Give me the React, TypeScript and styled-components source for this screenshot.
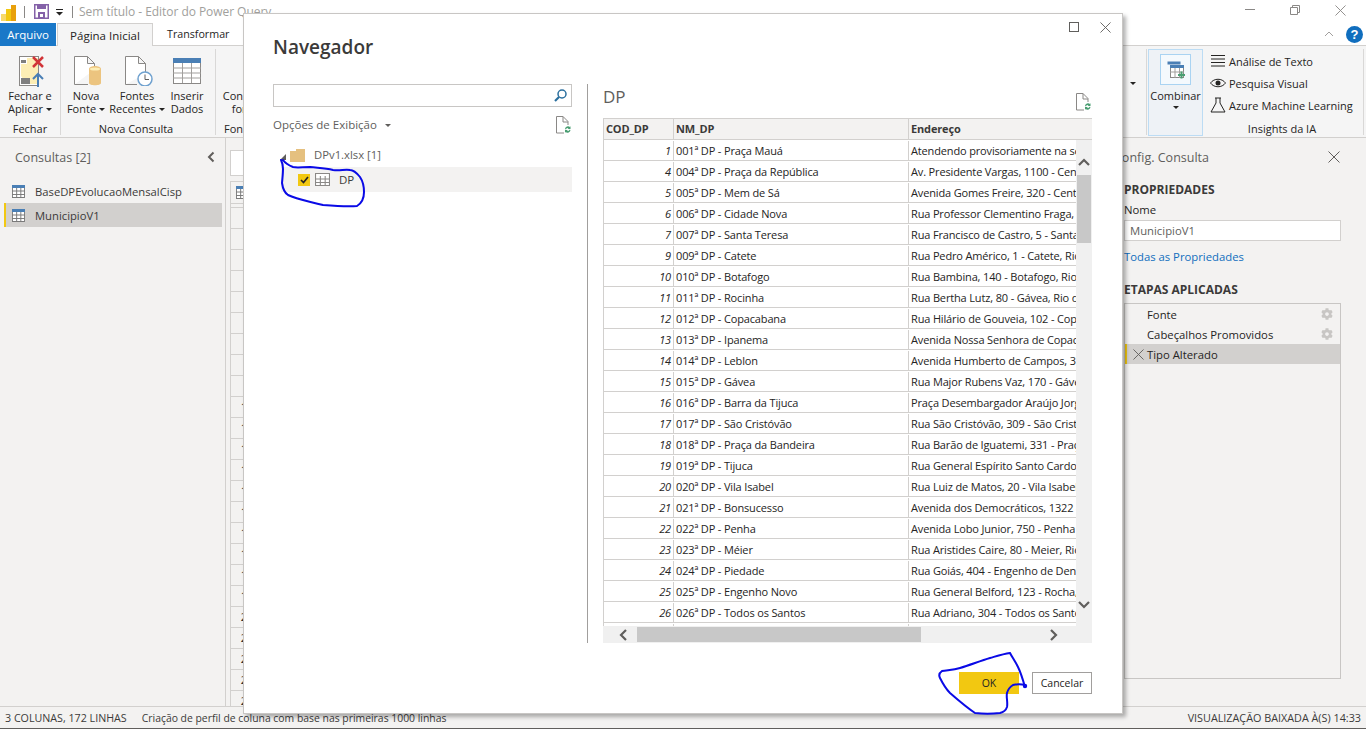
import React from "react";
import styled, { createGlobalStyle } from "styled-components";
import { FaCog } from "react-icons/fa";

const FONT = `"Open Sans", "Noto Sans", "Liberation Sans", sans-serif`;

const Global = createGlobalStyle`
  html, body { margin: 0; padding: 0; overflow: hidden; }
  body { font-family: ${FONT}; font-size: 12px; color: #252423; background: #f3f2f1; }
  * { box-sizing: border-box; }
`;

const Page = styled.div`
  position: relative;
  width: 1366px;
  height: 729px;
  overflow: hidden;
  display: flex;
  flex-direction: column;
  background: #f3f2f1;
`;

/* ---------- title bar ---------- */
const TitleBar = styled.div`
  height: 23px;
  background: #fff;
  display: flex;
  align-items: center;
  flex: none;
`;
const TitleLogo = styled.svg`
  margin-left: 1px;
  width: 15px;
  height: 18px;
`;
const TitleSep = styled.span<{ $r: number }>`
  width: 1px;
  height: 12px;
  background: #8a8886;
  margin: 0 ${(p) => p.$r}px 0 8px;
`;
const TitleText = styled.span`
  font-size: 12px;
  letter-spacing: -0.05px;
  color: #a19f9d;
  white-space: nowrap;
`;
const WinButtons = styled.div`
  margin-left: auto;
  display: flex;
  align-items: center;
  gap: 35px;
  padding: 0 20px 3px 0;
`;

/* ---------- tabs ---------- */
const TabRow = styled.div`
  height: 23px;
  flex: none;
  display: flex;
  align-items: stretch;
  background: #fff;
  border-bottom: 1px solid #d2d0ce;
`;
const FileTab = styled.div`
  width: 56px;
  height: 23px;
  background: #1a78c8;
  color: #fff;
  font-size: 11.5px;
  display: flex;
  align-items: center;
  justify-content: center;
`;
const ActiveTab = styled.div`
  margin-left: 1px;
  width: 96px;
  height: 23px;
  font-size: 11.5px;
  white-space: nowrap;
  display: flex;
  align-items: center;
  justify-content: center;
  background: #f5f5f5;
  border: 1px solid #d2d0ce;
  border-bottom: none;
  z-index: 1;
`;
const Tab = styled.div`
  padding: 0 14px;
  height: 22px;
  font-size: 10.7px;
  white-space: nowrap;
  display: flex;
  align-items: center;
`;
const TabRight = styled.div`
  margin-left: auto;
  display: flex;
  align-items: center;
  gap: 12px;
  padding-right: 3px;
`;
const HelpBadge = styled.span`
  width: 17px;
  height: 17px;
  border-radius: 50%;
  background: #106ebe;
  color: #fff;
  font-weight: 700;
  font-size: 13px;
  font-family: "Liberation Sans", sans-serif;
  display: flex;
  align-items: center;
  justify-content: center;
`;

/* ---------- ribbon ---------- */
const Ribbon = styled.div`
  height: 92px;
  flex: none;
  display: flex;
  background: #f5f5f5;
  border-bottom: 1px solid #d2d0ce;
  padding: 3px 2px 0 0;
`;
const Group = styled.div<{ $w: number; $noSep?: boolean }>`
  width: ${(p) => p.$w}px;
  flex: none;
  height: 86px;
  display: flex;
  flex-direction: column;
  border-right: ${(p) => (p.$noSep ? "none" : "1px solid #d9d8d7")};
`;
const GroupItems = styled.div`
  flex: 1;
  min-height: 0;
  display: flex;
`;
const GroupLabel = styled.div<{ $pl?: number; $pr?: number }>`
  height: 16px;
  margin-bottom: -2px;
  padding: 0 ${(p) => p.$pr ?? 0}px 0 ${(p) => p.$pl ?? 0}px;
  font-size: 11px;
  color: #252423;
  text-align: ${(p) => (p.$pl ? "left" : "center")};
  white-space: nowrap;
  line-height: 16px;
`;
const BigButton = styled.div<{ $w: number }>`
  width: ${(p) => p.$w}px;
  flex: none;
  display: flex;
  flex-direction: column;
  align-items: center;
  font-size: 11px;
  line-height: 13px;
  text-align: center;
  white-space: nowrap;
  padding-top: 4px;
`;
const IconSlot = styled.div`
  height: 36px;
  display: flex;
  align-items: center;
  justify-content: center;
`;
const Caret = styled.span`
  display: inline-block;
  width: 0;
  height: 0;
  margin-left: 3px;
  vertical-align: 2px;
  border-left: 3px solid transparent;
  border-right: 3px solid transparent;
  border-top: 3px solid #252423;
`;
const RibbonSpacer = styled.div`
  flex: 1;
  display: flex;
  justify-content: flex-end;
  padding: 33px 10px 0 0;
`;
const CombineGroup = styled.div`
  width: 55px;
  margin: 0 1px 0 1px;
  height: 87px;
  flex: none;
  background: #eef2f6;
  border: 1px solid #bcdcf4;
  display: flex;
  flex-direction: column;
  align-items: center;
  padding-top: 4px;
  font-size: 11px;
  line-height: 13px;
`;
const CombineIcon = styled.div`
  width: 31px;
  height: 31px;
  background: #f4f9fd;
  border: 1px solid #a9d3f2;
  display: flex;
  align-items: center;
  justify-content: center;
  margin-bottom: 4px;
`;
const CombineCaret = styled(Caret)`
  margin: 4px 0 0 0;
`;
const InsightList = styled.div`
  flex: 1;
  min-height: 0;
  display: flex;
  flex-direction: column;
  padding: 1px 0 0 6px;
`;
const InsightRow = styled.div`
  height: 22px;
  flex: none;
  display: flex;
  align-items: center;
  gap: 3px;
  font-size: 11px;
  white-space: nowrap;
`;
const VSep = styled.div`
  width: 1px;
  height: 86px;
  background: #d9d8d7;
  flex: none;
`;

/* ---------- main area ---------- */
const Main = styled.div`
  flex: 1;
  display: flex;
  min-height: 0;
`;
const LeftPanel = styled.aside`
  width: 226px;
  flex: none;
  border-right: 1px solid #d2d0ce;
  padding: 0 0 0 4px;
`;
const PanelHead = styled.div`
  height: 38px;
  margin-bottom: 3px;
  display: flex;
  align-items: center;
  justify-content: space-between;
  padding: 0 9px 0 11px;
  font-size: 12.5px;
  color: #605e5c;
`;
const QueryRow = styled.div<{ $active?: boolean }>`
  width: 218px;
  height: 24px;
  display: flex;
  align-items: center;
  gap: 10px;
  padding-left: 6px;
  font-size: 11.25px;
  white-space: nowrap;
  color: #3b3a39;
  background: ${(p) => (p.$active ? "#d2d0ce" : "transparent")};
  border-left: 2px solid ${(p) => (p.$active ? "#f2c811" : "transparent")};
`;
const Center = styled.div`
  flex: 1;
  min-width: 0;
  padding: 12px 0 0 4px;
  overflow: hidden;
`;
const FormulaBox = styled.div`
  height: 26px;
  background: #fff;
  border: 1px solid #d2d0ce;
  margin-bottom: 5px;
`;
const BackGrid = styled.div`
  border-left: 1px solid #d2d0ce;
  border-top: 1px solid #d2d0ce;
`;
const BackHead = styled.div`
  height: 22px;
  padding: 4px 0 0 5px;
  border-bottom: 1px solid #d2d0ce;
  margin-bottom: 3px;
`;
const BackRow = styled.div`
  height: 21px;
  width: 32px;
  font-size: 11px;
  line-height: 20px;
  text-align: center;
  border-top: 1px solid #d2d0ce;
`;
const RightPanel = styled.aside`
  width: 258px;
  flex: none;
  padding-left: 16px;
`;
const RightHead = styled.div`
  height: 38px;
  margin: 0 0 6px -10px;
  display: flex;
  align-items: center;
  justify-content: space-between;
  padding-right: 26px;
  font-size: 12.5px;
  color: #605e5c;
`;
const SectionTitle = styled.div<{ $mt?: number }>`
  margin-top: ${(p) => p.$mt ?? 0}px;
  font-size: 12px;
  font-weight: 700;
  line-height: 16px;
  color: #3b3a39;
`;
const FieldLabel = styled.div`
  margin-top: 4px;
  font-size: 11.3px;
  line-height: 16px;
`;
const FieldInput = styled.div`
  margin-top: 2px;
  width: 217px;
  height: 21px;
  background: #fff;
  border: 1px solid #d2d0ce;
  padding-left: 5px;
  font-size: 11.3px;
  line-height: 19px;
  color: #605e5c;
`;
const PropLink = styled.div`
  margin-top: 8px;
  font-size: 11.3px;
  line-height: 16px;
  color: #106ebe;
`;
const StepList = styled.div`
  margin-top: 5px;
  width: 217px;
  height: 376px;
  border: 1px solid #c8c6c4;
`;
const StepRow = styled.div<{ $active?: boolean }>`
  height: 20px;
  display: flex;
  align-items: center;
  font-size: 11.3px;
  white-space: nowrap;
  padding: 0 7px 0 ${(p) => (p.$active ? "6px" : "22px")};
  background: ${(p) => (p.$active ? "#d2d0ce" : "transparent")};
  border-left: ${(p) => (p.$active ? "2px solid #f2c811" : "none")};
`;
const StepName = styled.span<{ $ml?: number }>`
  flex: 1;
  margin-left: ${(p) => p.$ml ?? 0}px;
`;

/* ---------- status ---------- */
const StatusBar = styled.div`
  height: 23px;
  flex: none;
  display: flex;
  align-items: center;
  padding: 0 5px;
  color: #3b3a39;
  border-top: 1px solid #d2d0ce;
  border-bottom: 1px solid #605e5c;
  white-space: nowrap;
`;
const StatusItem = styled.span<{ $size: number; $ml?: string }>`
  font-size: ${(p) => p.$size}px;
  margin-left: ${(p) => p.$ml ?? "0"};
`;

/* ---------- dialog ---------- */
const Dialog = styled.div`
  position: absolute;
  left: 243px;
  top: 13px;
  width: 880px;
  height: 701px;
  background: #fff;
  border: 1px solid #c8c6c4;
  box-shadow: 3px 3px 4px rgba(0, 0, 0, 0.3);
  display: flex;
  flex-direction: column;
`;
const DialogHead = styled.div`
  height: 70px;
  flex: none;
  display: flex;
  justify-content: space-between;
  padding: 0 11px 0 29px;
`;
const DialogTitle = styled.div`
  margin-top: 19px;
  font-size: 19px;
  font-weight: 600;
  line-height: 28px;
  color: #3b3a39;
`;
const DialogWinBtns = styled.div`
  display: flex;
  gap: 21px;
  padding-top: 8px;
  align-items: flex-start;
`;
const DialogBody = styled.div`
  flex: 1;
  min-height: 0;
  display: flex;
  padding: 0 30px 0 29px;
`;
const NavCol = styled.div`
  width: 299px;
  flex: none;
`;
const SearchBox = styled.div`
  height: 23px;
  border: 1px solid #c8c6c4;
  display: flex;
  align-items: center;
  justify-content: flex-end;
  padding-right: 3px;
`;
const OptionsRow = styled.div`
  height: 35px;
  display: flex;
  align-items: center;
  justify-content: space-between;
  padding-right: 1px;
  font-size: 11.5px;
  color: #605e5c;
`;
const OptionsCaret = styled.span`
  display: inline-block;
  width: 0;
  height: 0;
  margin-left: 8px;
  vertical-align: 2px;
  border-left: 3px solid transparent;
  border-right: 3px solid transparent;
  border-top: 3px solid #605e5c;
`;
const TreeRoot = styled.div`
  height: 25px;
  display: flex;
  align-items: center;
  padding-left: 7px;
  font-size: 11.3px;
  color: #605e5c;
`;
const TreeTriangle = styled.span`
  width: 0;
  height: 0;
  margin: 5px 4px 0 0;
  border-bottom: 6px solid #605e5c;
  border-left: 6px solid transparent;
`;
const TreeLeaf = styled.div`
  margin-left: 8px;
  height: 25px;
  background: #f3f2f1;
  display: flex;
  align-items: center;
  padding-left: 17px;
  font-size: 11.5px;
  color: #3b3a39;
`;
const LeafName = styled.span`
  margin-left: 9px;
`;
const CheckBox = styled.span`
  width: 12px;
  height: 12px;
  background: #f2c811;
  display: flex;
  align-items: center;
  justify-content: center;
  margin-right: 5px;
`;
const Divider = styled.div`
  width: 1px;
  height: 559px;
  background: #a19f9d;
  margin: 0 15px 0 15px;
  flex: none;
`;
const PreviewCol = styled.div`
  flex: 1;
  min-width: 0;
`;
const PreviewHead = styled.div`
  height: 34px;
  display: flex;
  justify-content: space-between;
  align-items: flex-start;
  font-size: 17px;
  line-height: 26px;
  color: #605e5c;
  padding-right: 1px;
  & > svg { margin-top: 9px; }
`;
const TableBox = styled.div`
  width: 489px;
  height: 525px;
  display: flex;
  flex-direction: column;
  font-size: 11px;
  letter-spacing: -0.15px;
`;
const HeadRow = styled.div`
  height: 22px;
  flex: none;
  display: flex;
  background: #f3f2f1;
  border: 1px solid #d2d0ce;
  border-right: none;
  font-weight: 700;
  color: #3b3a39;
`;
const ColOne = styled.div<{ $italic?: boolean }>`
  width: 70px;
  flex: none;
  padding: ${(p) => (p.$italic ? "0 2px 0 0" : "0 0 0 2px")};
  text-align: ${(p) => (p.$italic ? "right" : "left")};
  font-style: ${(p) => (p.$italic ? "italic" : "normal")};
  border-right: 1px solid #d2d0ce;
  line-height: 20px;
`;
const ColTwo = styled.div`
  width: 235px;
  flex: none;
  padding-left: 2px;
  border-right: 1px solid #d2d0ce;
  line-height: 20px;
  white-space: nowrap;
  overflow: hidden;
`;
const ColThree = styled.div`
  flex: 1;
  min-width: 0;
  padding-left: 2px;
  line-height: 20px;
  white-space: nowrap;
  overflow: hidden;
`;
const BodyWrap = styled.div`
  flex: 1;
  min-height: 0;
  display: flex;
`;
const RowsCol = styled.div`
  flex: 1;
  min-width: 0;
  display: flex;
  flex-direction: column;
`;
const RowsClip = styled.div`
  flex: 1;
  min-height: 0;
  overflow: hidden;
  border-left: 1px solid #d2d0ce;
`;
const DataRow = styled.div`
  height: 21px;
  padding-top: 1px;
  display: flex;
  border-bottom: 1px solid #d2d0ce;
  color: #252423;
`;
const VScroll = styled.div`
  width: 16px;
  flex: none;
  background: #f0f0f0;
  display: flex;
  flex-direction: column;
  align-items: center;
  padding-top: 17px;
`;
const VThumb = styled.div`
  width: 14px;
  height: 68px;
  background: #c8c8c8;
  margin-top: 4px;
`;
const VDown = styled.div`
  margin-top: 355px;
`;
const HScroll = styled.div`
  height: 17px;
  flex: none;
  background: #f0f0f0;
  display: flex;
  align-items: center;
  padding-left: 14px;
`;
const HThumb = styled.div`
  width: 284px;
  height: 15px;
  background: #c8c8c8;
  margin: 0 125px 0 6px;
`;
const DialogFoot = styled.div`
  height: 59px;
  flex: none;
  display: flex;
  justify-content: flex-end;
  gap: 13px;
  padding: 18px 30px 0 0;
`;
const FootButton = styled.div<{ $primary?: boolean }>`
  width: 60px;
  height: 22px;
  font-size: 10.5px;
  line-height: 21px;
  text-align: center;
  background: ${(p) => (p.$primary ? "#f2c811" : "#fff")};
  border: 1px solid ${(p) => (p.$primary ? "#f2c811" : "#a19f9d")};
  color: #252423;
`;
const Scribbles = styled.svg`
  position: absolute;
  left: 0;
  top: 0;
  width: 1366px;
  height: 729px;
  pointer-events: none;
`;

/* ---------- icons ---------- */
const X = ({ s = 12, c = "#605e5c" }: { s?: number; c?: string }) => (
  <svg width={s} height={s} viewBox="0 0 12 12" style={{ flex: "none" }}>
    <path d="M.5.5l11 11M11.5.5l-11 11" stroke={c} strokeWidth="1" fill="none" />
  </svg>
);
const ChevL = () => (
  <svg width="10" height="12" viewBox="0 0 10 12">
    <path d="M7.500 1.500L3 6l4.500 4.500" stroke="#605e5c" strokeWidth="2" fill="none" />
  </svg>
);
const GridIcon = ({ w = 13, h = 13, bar = "#4a7fb5", line = "#7a7a7a" }: { w?: number; h?: number; bar?: string; line?: string }) => (
  <svg width={w} height={h} viewBox="0 0 14 13" preserveAspectRatio="none" style={{ flex: "none" }}>
    <rect x=".5" y=".5" width="13" height="12" fill="#fff" stroke={line} />
    <rect x="0" y="0" width="14" height="3" fill={bar} />
    <path d="M0 6h14M0 9.500h14M5 3v10M9.500 3v10" stroke={line} strokeWidth="1" />
  </svg>
);
const Refresh = () => (
  <svg width="15" height="18" viewBox="0 0 15 18" style={{ flex: "none" }}>
    <path d="M8 17H.5V.5H7l5 5V9M7 .5V6h5" fill="none" stroke="#8a8886" />
    <path d="M9 13a3 3 0 0 1 5-2l.5-1v3h-3l1-.8A2 2 0 0 0 10 13.500zM14.500 14a3 3 0 0 1-5 2l-.5 1v-3h3l-1 .8a2 2 0 0 0 2.500-1z" fill="#4a9e72" />
  </svg>
);

const rows: [number, string, string][] = [
  [1, "001ª DP - Praça Mauá", "Atendendo provisoriamente na sede"],
  [4, "004ª DP - Praça da República", "Av. Presidente Vargas, 1100 - Centro"],
  [5, "005ª DP - Mem de Sá", "Avenida Gomes Freire, 320 - Centro"],
  [6, "006ª DP - Cidade Nova", "Rua Professor Clementino Fraga, 77"],
  [7, "007ª DP - Santa Teresa", "Rua Francisco de Castro, 5 - Santa"],
  [9, "009ª DP - Catete", "Rua Pedro Américo, 1 - Catete, Rio"],
  [10, "010ª DP - Botafogo", "Rua Bambina, 140 - Botafogo, Rio"],
  [11, "011ª DP - Rocinha", "Rua Bertha Lutz, 80 - Gávea, Rio de"],
  [12, "012ª DP - Copacabana", "Rua Hilário de Gouveia, 102 - Copa"],
  [13, "013ª DP - Ipanema", "Avenida Nossa Senhora de Copacaba"],
  [14, "014ª DP - Leblon", "Avenida Humberto de Campos, 315"],
  [15, "015ª DP - Gávea", "Rua Major Rubens Vaz, 170 - Gávea"],
  [16, "016ª DP - Barra da Tijuca", "Praça Desembargador Araújo Jorge"],
  [17, "017ª DP - São Cristóvão", "Rua São Cristóvão, 309 - São Cristó"],
  [18, "018ª DP - Praça da Bandeira", "Rua Barão de Iguatemi, 331 - Praça"],
  [19, "019ª DP - Tijuca", "Rua General Espírito Santo Cardoso"],
  [20, "020ª DP - Vila Isabel", "Rua Luiz de Matos, 20 - Vila Isabel"],
  [21, "021ª DP - Bonsucesso", "Avenida dos Democráticos, 1322 -"],
  [22, "022ª DP - Penha", "Avenida Lobo Junior, 750 - Penha"],
  [23, "023ª DP - Méier", "Rua Aristides Caire, 80 - Meier, Rio"],
  [24, "024ª DP - Piedade", "Rua Goiás, 404 - Engenho de Dentro"],
  [25, "025ª DP - Engenho Novo", "Rua General Belford, 123 - Rocha,"],
  [26, "026ª DP - Todos os Santos", "Rua Adriano, 304 - Todos os Santos"],
];

const ScrollChev = ({ d }: { d: "u" | "d" | "l" | "r" }) => {
  const p = {
    u: "M2 8l5-5 5 5",
    d: "M2 4l5 5 5-5",
    l: "M9 2L4 7l5 5",
    r: "M5 2l5 5-5 5",
  }[d];
  return (
    <svg width="14" height="14" viewBox="0 0 14 14" style={{ flex: "none" }}>
      <path d={p} fill="none" stroke="#605e5c" strokeWidth="2.2" />
    </svg>
  );
};

export default function App() {
  return (
    <Page>
      <Global />
      <TitleBar>
        <TitleLogo viewBox="0 0 15 18">
          <rect x="10" y="2" width="5" height="16" fill="#e8a00c" />
          <rect x="5" y="6" width="5" height="12" fill="#f2c811" />
          <rect x="0" y="11" width="5" height="7" fill="#f7d96b" />
        </TitleLogo>
        <TitleSep $r={9} />
        <svg width="15" height="15" viewBox="0 0 15 15">
          <rect x=".75" y=".75" width="13.5" height="13.5" fill="#fff" stroke="#8461a8" strokeWidth="1.5" />
          <rect x="3" y="1" width="9" height="4" fill="#8461a8" />
          <rect x="4" y="8" width="7" height="6" fill="#8461a8" />
          <rect x="6" y="10" width="3" height="3" fill="#fff" />
        </svg>
        <svg width="9" height="8" viewBox="0 0 9 8" style={{ marginLeft: 6 }}>
          <path d="M1 1h7v1H1zM1 4h7L4.500 7.500z" fill="#252423" />
        </svg>
        <TitleSep $r={6} />
        <TitleText>Sem título - Editor do Power Query</TitleText>
        <WinButtons>
          <svg width="10" height="2" viewBox="0 0 10 2"><path d="M0 .5h10" stroke="#8a8886" /></svg>
          <svg width="10" height="10" viewBox="0 0 10 10"><path d="M.5 2.500h7v7h-7zM2.500 2.500v-2h7v7h-2" fill="none" stroke="#8a8886" /></svg>
          <X s={11} c="#8a8886" />
        </WinButtons>
      </TitleBar>
      <TabRow>
        <FileTab>Arquivo</FileTab>
        <ActiveTab>Página Inicial</ActiveTab>
        <Tab>Transformar</Tab>
        <TabRight>
          <svg width="10" height="6" viewBox="0 0 10 6"><path d="M1 5l4-4 4 4" fill="none" stroke="#a19f9d" /></svg>
          <HelpBadge>?</HelpBadge>
        </TabRight>
      </TabRow>
      <Ribbon>
        <Group $w={61}>
          <GroupItems>
            <BigButton $w={60}>
              <IconSlot>
                <svg width="26" height="31" viewBox="0 0 26 31" style={{ marginLeft: 3 }}>
                  <rect x=".5" y=".5" width="19" height="29" fill="#fff" stroke="#8a8886" />
                  <path d="M8 2h11v26H8l-6-8V8h6z" fill="#fdeeb5" />
                  <rect x="2" y="4" width="5" height="3" fill="#7f7f7f" />
                  <rect x="2" y="22" width="9" height="6" fill="#7f7f7f" />
                  <path d="M14 1l10 10M24 1L14 11" stroke="#d13438" strokeWidth="2.500" />
                  <path d="M19 31V18M14 23l5-5 5 5" stroke="#4a7fb5" strokeWidth="2" fill="none" />
                </svg>
              </IconSlot>
              <span>Fechar e</span>
              <span>Aplicar<Caret /></span>
            </BigButton>
          </GroupItems>
          <GroupLabel>Fechar</GroupLabel>
        </Group>
        <Group $w={155}>
          <GroupItems>
            <BigButton $w={50}>
              <IconSlot>
                <svg width="28" height="30" viewBox="0 0 28 30" style={{ marginLeft: 3 }}>
                  <path d="M.5 28.500V.5h13l7 7v6M13.500.5v7h7M14 28.500H.5" fill="#fff" stroke="#8a8886" />
                  <path d="M15 13c0-4 12-4 12 0v14c0 3-12 3-12 0z" fill="#ecc47f" />
                  <ellipse cx="21" cy="13" rx="5" ry="1.500" fill="#fdeeb5" />
                </svg>
              </IconSlot>
              <span>Nova</span>
              <span>Fonte<Caret /></span>
            </BigButton>
            <BigButton $w={52}>
              <IconSlot>
                <svg width="28" height="30" viewBox="0 0 28 30" style={{ marginLeft: 3 }}>
                  <path d="M.5 28.500V.5h13l7 7v10M13.500.5v7h7M12 28.500H.5" fill="#fff" stroke="#8a8886" />
                  <circle cx="20" cy="23" r="7" fill="#fff" stroke="#6fa1cf" strokeWidth="1.500" />
                  <path d="M20 18.500V23.500h4" fill="none" stroke="#605e5c" />
                </svg>
              </IconSlot>
              <span>Fontes</span>
              <span>Recentes<Caret /></span>
            </BigButton>
            <BigButton $w={48}>
              <IconSlot>
                <svg width="28" height="26" viewBox="0 0 28 26">
                  <rect x=".5" y=".5" width="27" height="25" fill="#fff" stroke="#8a8886" />
                  <rect x="0" y="0" width="28" height="5" fill="#4a7fb5" />
                  <path d="M0 10h28M0 15h28M0 20h28M9.500 5v20M18.500 5v20" stroke="#a19f9d" />
                </svg>
              </IconSlot>
              <span>Inserir</span>
              <span>Dados</span>
            </BigButton>
          </GroupItems>
          <GroupLabel $pr={4}>Nova Consulta</GroupLabel>
        </Group>
        <Group $w={64}>
          <GroupItems>
            <BigButton $w={64}>
              <IconSlot />
              <span>Consultas</span>
              <span>fontes</span>
            </BigButton>
          </GroupItems>
          <GroupLabel $pl={8}>Fontes</GroupLabel>
        </Group>
        <RibbonSpacer><Caret /></RibbonSpacer>
        <VSep />
        <CombineGroup>
          <CombineIcon>
            <svg width="18" height="18" viewBox="0 0 18 18">
              <rect x=".5" y=".5" width="13" height="3" fill="#4a7fb5" />
              <rect x="3.500" y="4.500" width="13" height="12" fill="#fff" stroke="#8a8886" />
              <rect x="3" y="4" width="14" height="3" fill="#4a7fb5" />
              <path d="M3 11h14M8 7v10M12.500 7v10" stroke="#a19f9d" />
              <path d="M11 14h7M14.500 10.500v7" stroke="#4a9e72" strokeWidth="2" />
            </svg>
          </CombineIcon>
          <span>Combinar</span>
          <CombineCaret />
        </CombineGroup>
        <Group $w={159} $noSep>
          <InsightList>
            <InsightRow>
              <svg width="16" height="14" viewBox="0 0 16 14"><path d="M1 1.500h14M1 5h14M1 8.500h14M1 12h14" stroke="#252423" /></svg>
              Análise de Texto
            </InsightRow>
            <InsightRow>
              <svg width="16" height="10" viewBox="0 0 16 10"><path d="M.5 5C4 0 12 0 15.500 5 12 10 4 10 .5 5z" fill="none" stroke="#252423" /><circle cx="8" cy="5" r="2.500" fill="#252423" /></svg>
              Pesquisa Visual
            </InsightRow>
            <InsightRow>
              <svg width="16" height="16" viewBox="0 0 16 16"><path d="M5 1h6M6 1v5L1 15h14L10 6V1" fill="none" stroke="#252423" /></svg>
              Azure Machine Learning
            </InsightRow>
          </InsightList>
          <GroupLabel $pr={3}>Insights da IA</GroupLabel>
        </Group>
        <VSep />
      </Ribbon>
      <Main>
        <LeftPanel>
          <PanelHead>
            <span>Consultas [2]</span>
            <ChevL />
          </PanelHead>
          <QueryRow>
            <GridIcon />
            BaseDPEvolucaoMensalCisp
          </QueryRow>
          <QueryRow $active>
            <GridIcon />
            MunicipioV1
          </QueryRow>
        </LeftPanel>
        <Center>
          <FormulaBox />
          <BackGrid>
            <BackHead><GridIcon /></BackHead>
            {Array.from({ length: 24 }, (_, i) => (
              <BackRow key={i}>{i + 1}</BackRow>
            ))}
          </BackGrid>
        </Center>
        <RightPanel>
          <RightHead>
            <span>Config. Consulta</span>
            <X />
          </RightHead>
          <SectionTitle>PROPRIEDADES</SectionTitle>
          <FieldLabel>Nome</FieldLabel>
          <FieldInput>MunicipioV1</FieldInput>
          <PropLink>Todas as Propriedades</PropLink>
          <SectionTitle $mt={17}>ETAPAS APLICADAS</SectionTitle>
          <StepList>
            <StepRow><StepName>Fonte</StepName><FaCog size={12} color="#c8c6c4" /></StepRow>
            <StepRow><StepName>Cabeçalhos Promovidos</StepName><FaCog size={12} color="#c8c6c4" /></StepRow>
            <StepRow $active>
              <X s={11} />
              <StepName $ml={3}>Tipo Alterado</StepName>
            </StepRow>
          </StepList>
        </RightPanel>
      </Main>
      <StatusBar>
        <StatusItem $size={10.7}>3 COLUNAS, 172 LINHAS</StatusItem>
        <StatusItem $size={10.4} $ml="15px">Criação de perfil de coluna com base nas primeiras 1000 linhas</StatusItem>
        <StatusItem $size={10.8} $ml="auto">VISUALIZAÇÃO BAIXADA À(S) 14:33</StatusItem>
      </StatusBar>

      <Dialog>
        <DialogHead>
          <DialogTitle>Navegador</DialogTitle>
          <DialogWinBtns>
            <svg width="10" height="10" viewBox="0 0 10 10"><rect x=".5" y=".5" width="9" height="9" fill="none" stroke="#605e5c" /></svg>
            <X s={11} />
          </DialogWinBtns>
        </DialogHead>
        <DialogBody>
          <NavCol>
            <SearchBox>
              <svg width="15" height="15" viewBox="0 0 15 15">
                <circle cx="9" cy="6" r="4" fill="none" stroke="#2a6f9e" strokeWidth="1.500" />
                <path d="M6 9l-4 4" stroke="#2a6f9e" strokeWidth="2.200" />
              </svg>
            </SearchBox>
            <OptionsRow>
              <span>Opções de Exibição<OptionsCaret /></span>
              <Refresh />
            </OptionsRow>
            <TreeRoot>
              <TreeTriangle />
              <svg width="16" height="14" viewBox="0 0 16 14" style={{ marginRight: 8 }}>
                <path d="M0 3h6V1h9v13H0z" fill="#e5c07f" />
              </svg>
              DPv1.xlsx [1]
            </TreeRoot>
            <TreeLeaf>
              <CheckBox>
                <svg width="9" height="8" viewBox="0 0 9 8"><path d="M1 4l2.500 2.500L8 1" fill="none" stroke="#252423" strokeWidth="1.700" /></svg>
              </CheckBox>
              <GridIcon w={15} h={13} bar="transparent" line="#8a8886" />
              <LeafName>DP</LeafName>
            </TreeLeaf>
          </NavCol>
          <Divider />
          <PreviewCol>
            <PreviewHead>
              <span>DP</span>
              <Refresh />
            </PreviewHead>
            <TableBox>
              <HeadRow>
                <ColOne>COD_DP</ColOne>
                <ColTwo>NM_DP</ColTwo>
                <ColThree>Endereço</ColThree>
              </HeadRow>
              <BodyWrap>
                <RowsCol>
                  <RowsClip>
                    {rows.map(([n, a, b]) => (
                      <DataRow key={n}>
                        <ColOne $italic>{n}</ColOne>
                        <ColTwo>{a}</ColTwo>
                        <ColThree>{b}</ColThree>
                      </DataRow>
                    ))}
                    <DataRow>
                      <ColOne $italic />
                      <ColTwo />
                      <ColThree />
                    </DataRow>
                  </RowsClip>
                  <HScroll>
                    <ScrollChev d="l" />
                    <HThumb />
                    <ScrollChev d="r" />
                  </HScroll>
                </RowsCol>
                <VScroll>
                  <ScrollChev d="u" />
                  <VThumb />
                  <VDown><ScrollChev d="d" /></VDown>
                </VScroll>
              </BodyWrap>
            </TableBox>
          </PreviewCol>
        </DialogBody>
        <DialogFoot>
          <FootButton $primary>OK</FootButton>
          <FootButton>Cancelar</FootButton>
        </DialogFoot>
      </Dialog>

      <Scribbles viewBox="0 0 1366 729">
        <path
          d="M281 160C284 166 283 172 282 183C283 190 285 193 288 195C296 199 303 200 323 205C335 206 348 207 357 206C362 203 364 198 364 192C364 186 362 180 360 177C356 172 352 170 350 170C345 169 340 171 333 170C325 168 318 168 310 167C303 167 297 168 293 167C288 165 285 163 283 160"
          fill="none"
          stroke="#0a0ae6"
          strokeWidth="2"
          strokeLinecap="round"
        />
        <path
          d="M1025 687C1023 680 1021 673 1018 667C1015 661 1012 657 1010 653C1003 654 997 656 990 658C980 661 970 665 960 668C953 670 947 670 942 671C939 673 939 676 940 678C943 684 946 689 950 693C958 700 966 707 975 713C983 714 992 714 1000 713C1004 712 1006 710 1007 707C1008 702 1006 697 1007 693C1008 689 1010 687 1013 685C1017 684 1021 684 1025 685"
          fill="none"
          stroke="#0a0ae6"
          strokeWidth="2"
          strokeLinecap="round"
        />
        <circle cx="1025" cy="686" r="2.200" fill="#0a0ae6" />
      </Scribbles>
    </Page>
  );
}
